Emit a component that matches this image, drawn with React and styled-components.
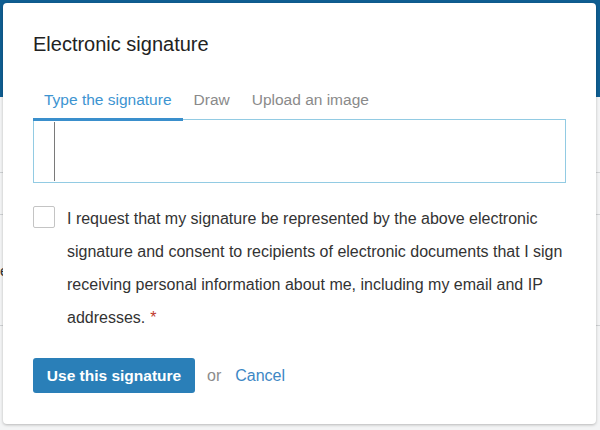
import React from 'react'
import styled, { createGlobalStyle } from 'styled-components'

const Global = createGlobalStyle`
	html, body {
		margin: 0;
		padding: 0;
		background: #f3f4f5;
		font-family: "Liberation Sans", Arial, sans-serif;
	}
`

const Page = styled.div`
	width: 600px;
	height: 430px;
	overflow: hidden;
	position: relative;
	background: #f3f4f5;
`

const Header = styled.div`
	height: 97px;
	background: #0f5e92;
`

const BgRow = styled.div`
	height: ${(p) => p.h}px;
	border-bottom: 1px solid #cfd2d4;
	display: flex;
	align-items: center;
	font-size: 15px;
	color: #333;
`

const BgText = styled.div`
	margin-left: 0;
`

const Modal = styled.div`
	position: absolute;
	top: 3px;
	left: 3px;
	width: 593px;
	height: 421px;
	box-sizing: border-box;
	background: #fff;
	border-radius: 4px;
	box-shadow: 0 1px 3px rgba(0, 0, 0, 0.25);
	padding: 29px 30px 30px 30px;
`

const Title = styled.h2`
	margin: 0;
	font-size: 20px;
	line-height: 24px;
	font-weight: normal;
	color: #222;
`

const Tabs = styled.div`
	display: flex;
	margin-top: 28px;
	position: relative;
	z-index: 1;
	margin-bottom: -2px;
`

const Tab = styled.div`
	padding: 6px 11px 9px 11px;
	font-size: 15.5px;
	line-height: 19px;
	color: ${(p) => (p.active ? '#3d94d1' : '#8a8a8a')};
	border-bottom: 3px solid ${(p) => (p.active ? '#3a8fcc' : 'transparent')};
`

const SigBox = styled.div`
	height: 64px;
	box-sizing: border-box;
	border: 1px solid #92cbe3;
	padding: 2px 0 1px 20px;
	display: flex;
`

const Caret = styled.span`
	width: 1px;
	background: #7a7a7a;
`

const Consent = styled.label`
	display: flex;
	gap: 12px;
	margin-top: 19px;
	font-size: 16px;
	line-height: 33px;
	color: #333;
`

const Box = styled.span`
	flex: none;
	width: 22px;
	height: 22px;
	box-sizing: border-box;
	border: 1px solid #c4c4c4;
	border-radius: 2px;
	margin-top: 4px;
`

const Required = styled.span`
	display: inline-block;
	color: #c0392b;
	margin-left: 5px;
`

const Actions = styled.div`
	display: flex;
	align-items: center;
	margin-top: 24px;
	font-size: 16px;
`

const Primary = styled.button`
	height: 35px;
	width: 162px;
	border: none;
	border-radius: 3px;
	background: #2a7fb8;
	color: #fff;
	font-family: inherit;
	font-size: 15.5px;
	font-weight: bold;
	padding: 0;
`

const Or = styled.span`
	color: #8c8c8c;
	margin-left: 12px;
`

const Link = styled.a`
	color: #3d87c4;
	margin-left: 14px;
	text-decoration: none;
`

const App = () => {
	return (
		<Page>
			<Global />
			<Header />
			<BgRow h={75} />
			<BgRow h={41} />
			<BgRow h={110}>
				<BgText>e</BgText>
			</BgRow>
			<Modal>
				<Title>Electronic signature</Title>
				<Tabs>
					<Tab active>Type the signature</Tab>
					<Tab>Draw</Tab>
					<Tab>Upload an image</Tab>
				</Tabs>
				<SigBox>
					<Caret />
				</SigBox>
				<Consent>
					<Box />
					<div>
						I request that my signature be represented by the above electronic signature and consent to
						recipients of electronic documents that I sign receiving personal information about me,
						including my email and IP addresses.<Required>*</Required>
					</div>
				</Consent>
				<Actions>
					<Primary>Use this signature</Primary>
					<Or>or</Or>
					<Link href="#">Cancel</Link>
				</Actions>
			</Modal>
		</Page>
	)
}

export default App
